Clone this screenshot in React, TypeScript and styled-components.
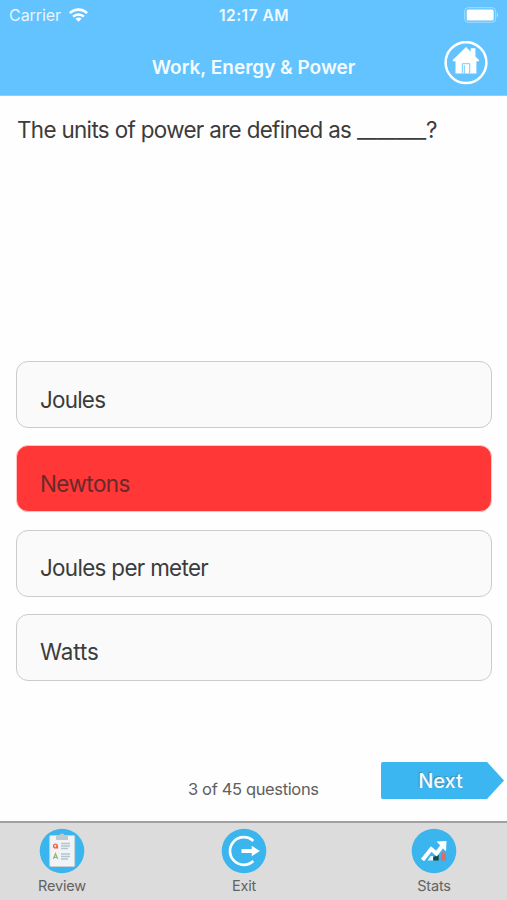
import React from 'react';
import styled, { createGlobalStyle } from 'styled-components';

const Global = createGlobalStyle`
  * { box-sizing: border-box; }
  body { margin: 0; background: #fff; font-family: Inter, "Liberation Sans", sans-serif; color: #3c3c3c; }
`;

const Screen = styled.div`
  width: 507px;
  height: 900px;
  display: flex;
  flex-direction: column;
  background: #fefefe;
  overflow: hidden;
`;

const Header = styled.header`
  height: 96px;
  flex: none;
  background: #62c3ff;
  border-bottom: 1px solid #8bd0fb;
  color: #fff;
`;

const StatusBar = styled.div`
  height: 30px;
  display: grid;
  grid-template-columns: 1fr auto 1fr;
  align-items: center;
  padding: 0 8px 0 9px;
`;

const Carrier = styled.div`
  display: flex;
  align-items: center;
  gap: 8px;
  font-size: 16px;
  letter-spacing: -0.05px;
  color: #e9f6ff;
`;

const Clock = styled.div`
  font-size: 15.5px;
  font-weight: 600;
  letter-spacing: 0.5px;
  color: #f1faff;
`;

const BatteryIcon = styled.svg`
  justify-self: end;
  display: block;
`;

const TitleBar = styled.div`
  height: 65px;
  display: grid;
  grid-template-columns: 64px 1fr 64px;
  align-items: center;
`;

const Title = styled.h1`
  grid-column: 2;
  margin: 11px 0 0;
  text-align: center;
  font-size: 19px;
  line-height: 24px;
  font-weight: 600;
  letter-spacing: 0;
  color: #f4fbff;
  white-space: nowrap;
`;

const HomeButton = styled.button`
  width: 44px;
  height: 44px;
  margin-left: 1px;
  padding: 0;
  border: 0;
  background: none;
  svg { display: block; }
`;

const Question = styled.p`
  margin: 0;
  padding: 19px 17px 0;
  height: 265px;
  flex: none;
  font-size: 22.4px;
  line-height: 30px;
  letter-spacing: -0.65px;
  white-space: nowrap;
`;

const Blank = styled.span`
  letter-spacing: -0.35px;
`;

const Options = styled.div`
  flex: none;
  display: flex;
  flex-direction: column;
  gap: 17.3px;
  padding: 0 15px 0 15.5px;
`;

const Option = styled.button<{ $wrong?: boolean; $tracking: number }>`
  height: 67px;
  border: ${p => (p.$wrong ? '1px solid #ffc4c4' : '1.5px solid #cbcbcb')};
  border-radius: 12px;
  background: ${p => (p.$wrong ? '#ff3737' : '#fafafa')};
  color: ${p => (p.$wrong ? '#672a2a' : '#3c3c3c')};
  font: 400 22.4px/30px Inter, "Liberation Sans", sans-serif;
  letter-spacing: ${p => p.$tracking}px;
  text-align: left;
  padding: 10px 23.5px 0;
`;

const Pager = styled.div`
  flex: 1;
  display: grid;
  grid-template-columns: 1fr auto;
  padding: 81px 3px 0 188px;
`;

const Progress = styled.div`
  margin-top: 17px;
  font-size: 16.5px;
  line-height: 20px;
  letter-spacing: -0.36px;
  color: #606060;
`;

const NextButton = styled.button`
  width: 123px;
  height: 37px;
  border: 0;
  border-radius: 2px;
  padding: 1px 4px 0 0;
  background: #3cb6f1;
  clip-path: polygon(0 0, 106px 0, 100% 50%, 106px 100%, 0 100%);
  color: #f4fbff;
  font: 500 20px/36px Inter, "Liberation Sans", sans-serif;
  text-shadow: -1px -1px 1px rgba(70, 110, 135, 0.6);
`;

const TabBar = styled.nav`
  flex: none;
  height: 79px;
  border-top: 2px solid #a0a0a0;
  background: #dcdcdc;
  display: grid;
  grid-template-columns: 72px 72px 72px;
  justify-content: space-between;
  padding: 5px 37px 0 26px;
`;

const Tab = styled.button<{ $shift?: number }>`
  margin-left: ${p => p.$shift || 0}px;
  padding: 0;
  border: 0;
  background: none;
  display: flex;
  flex-direction: column;
  align-items: center;
  gap: 3px;
  color: #626262;
  font: 400 14.5px/18px Inter, "Liberation Sans", sans-serif;
  letter-spacing: -0.2px;
`;

const WifiIcon = () => (
  <svg width="19" height="14" viewBox="0 0 19 14" fill="none" stroke="#fff" strokeWidth="2.6">
    <path d="M.9 5.1C5.7.4 13.3.4 18.1 5.1" />
    <path d="M4.100 8.600C7.200 5.700 11.800 5.700 14.900 8.600" />
    <path d="M9.500 13.700 6.500 10.800a4.200 4.200 0 0 1 6 0Z" fill="#fff" stroke="none" />
  </svg>
);

const HomeIcon = () => (
  <svg width="44" height="44" viewBox="0 0 44 44">
    <circle cx="22" cy="21.600" r="20.400" fill="none" stroke="#fff" strokeWidth="2.500" />
    <path d="M22 6 26.700 10.700V7.200h4.700v8.200L35 19v1.200h-2.600V32.500H11.500V20.200H8.800V19Z" fill="#fff" />
    <path d="M18.300 32.500V22.700h7.400v9.800M20.300 24.300v8.200" fill="none" stroke="#75c8fa" strokeWidth="1" />
  </svg>
);

const ReviewIcon = () => (
  <svg width="46" height="46" viewBox="0 0 46 46">
    <circle cx="23" cy="23" r="22.300" fill="#3bb5ee" />
    <rect x="10.700" y="7.500" width="25" height="31" rx="1" fill="#f1f4f6" stroke="#c6ced3" />
    <path d="M17 12V7h3.500q0-1.500 2.500-1.500T25.500 7H29v5Z" fill="#bfc9cf" />
    <circle cx="16.500" cy="18" r="1.900" fill="none" stroke="#ed664c" strokeWidth="1.400" />
    <path d="m17 18 2 2.300" stroke="#ed664c" strokeWidth="1.200" />
    <path d="m14.300 31 2.200-5.500 2.200 5.500m-3.600-1.700h2.900" fill="none" stroke="#95b475" strokeWidth="1.200" />
    <path d="M22 15.500h9M22 18h9M22 20.500h7M22 26h9M22 28.500h9M22 31h7" stroke="#b3c4d0" strokeWidth="1.600" />
  </svg>
);

const ExitIcon = () => (
  <svg width="46" height="46" viewBox="0 0 46 46">
    <circle cx="23" cy="23" r="22.300" fill="#3bb5ee" />
    <path d="M32.300 13a13.800 13.800 0 1 0 0 20" fill="none" stroke="#fff" strokeWidth="2.700" />
    <path d="M20.500 21.100h10.200v-3.400l8.200 5.300-8.200 5.300v-3.400H20.500Z" fill="#fff" />
  </svg>
);

const StatsIcon = () => (
  <svg width="46" height="46" viewBox="0 0 46 46">
    <circle cx="23" cy="23" r="22.300" fill="#3bb5ee" />
    <path d="m16.500 32.500 3.200-4.500h2.300v4.500Z" fill="#e7f4f7" />
    <path d="M22.300 29 27.700 26.800v5.700h-5.400Z" fill="#17483f" />
    <path d="m30 26 2.300-2.500 2.700 2.500v6.500h-5Z" fill="#e56a65" />
    <path d="m11.500 32 8.700-11 5.300 4.500 6.500-8.500" fill="none" stroke="#fff" strokeWidth="4" />
    <path d="m25.500 13.500 10-.5-.5 10.500Z" fill="#fff" />
  </svg>
);

const answers = [
  { text: 'Joules', tracking: -0.75 },
  { text: 'Newtons', wrong: true, tracking: -0.5 },
  { text: 'Joules per meter', tracking: -0.67 },
  { text: 'Watts', tracking: -0.1 },
];

export default function App() {
  return (
    <Screen>
      <Global />
      <Header>
        <StatusBar>
          <Carrier>Carrier <WifiIcon /></Carrier>
          <Clock>12:17 AM</Clock>
          <BatteryIcon width="35" height="16" viewBox="0 0 35 16">
            <rect x=".7" y=".7" width="31" height="14.600" rx="3.500" fill="none" stroke="#a9ddfe" />
            <rect x="2.700" y="2.600" width="27" height="10.800" rx="1.500" fill="#fff" />
            <path d="M33 5.500q2 2.500 0 5Z" fill="#b9e4ff" />
          </BatteryIcon>
        </StatusBar>
        <TitleBar>
          <Title>Work, Energy &amp; Power</Title>
          <HomeButton aria-label="Home"><HomeIcon /></HomeButton>
        </TitleBar>
      </Header>
      <Question>The units of power are defined as <Blank>_______</Blank>?</Question>
      <Options>
        {answers.map(a => (
          <Option key={a.text} $wrong={a.wrong} $tracking={a.tracking}>{a.text}</Option>
        ))}
      </Options>
      <Pager>
        <Progress>3 of 45 questions</Progress>
        <NextButton>Next</NextButton>
      </Pager>
      <TabBar>
        <Tab><ReviewIcon />Review</Tab>
        <Tab $shift={-8}><ExitIcon />Exit</Tab>
        <Tab><StatsIcon />Stats</Tab>
      </TabBar>
    </Screen>
  );
}
